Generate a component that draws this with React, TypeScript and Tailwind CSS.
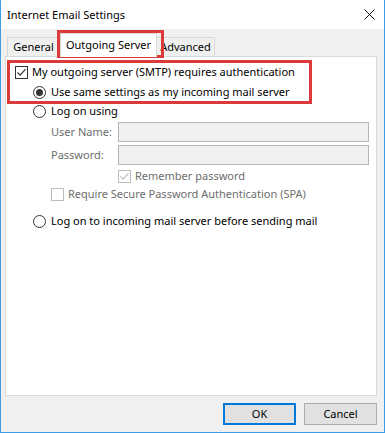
import React from "react";

const font = { fontFamily: '"Noto Sans", "Segoe UI", sans-serif' };

function CheckBox({ checked, disabled }: { checked?: boolean; disabled?: boolean }) {
  const color = disabled ? "#bcbcbc" : "#333333";
  return (
    <span
      className={`flex h-[13px] w-[13px] shrink-0 items-center justify-center border bg-white ${
        disabled ? "border-[#bcbcbc]" : "border-[#333333]"
      }`}
    >
      {checked ? (
        <svg width="11" height="11" viewBox="0 0 11 11">
          <path d="M1.5 5.5 L4.2 8.2 L9.5 2.2" fill="none" stroke={color} strokeWidth="1.2" />
        </svg>
      ) : null}
    </span>
  );
}

function Radio({ checked }: { checked?: boolean }) {
  return (
    <span className="flex h-[13px] w-[13px] shrink-0 items-center justify-center rounded-full border border-[#333333] bg-white">
      {checked ? <span className="h-[7px] w-[7px] rounded-full bg-[#333333]" /> : null}
    </span>
  );
}

export default function App() {
  return (
    <div
      className="relative flex h-[433px] w-[385px] flex-col border-x border-b border-[#3c9de6] bg-[#f0f0f0] text-[11px] text-black"
      style={font}
    >
      {/* title bar */}
      <div className="flex h-[29px] shrink-0 items-center justify-between bg-white pl-[6px] pr-[8px]">
        <span className="text-[11px] leading-none">Internet Email Settings</span>
        <svg width="11" height="11" viewBox="0 0 11 11" className="mr-[1px]">
          <path d="M0.5 0.5 L10.5 10.5 M10.5 0.5 L0.5 10.5" stroke="#111" strokeWidth="1" />
        </svg>
      </div>

      <div className="flex flex-1 flex-col pl-[4px] pr-[7px]">
        {/* tabs */}
        <div className="flex h-[27px] items-end pl-[2px]">
          <div className="flex h-[19px] w-[53px] items-center justify-center border-x border-t border-[#d9d9d9] bg-[#f0f0f0]">
            General
          </div>
          <div className="relative z-10 -mb-px flex h-[24px] w-[97px] items-start justify-center border-x border-t border-[#d9d9d9] bg-white pt-[3px]">
            Outgoing Server
          </div>
          <div className="flex h-[19px] w-[58px] items-center justify-center border-r border-t border-[#d9d9d9] bg-[#f0f0f0]">
            Advanced
          </div>
        </div>

        {/* panel */}
        <div className="flex h-[340px] flex-col border border-[#d9d9d9] bg-white pl-[9px] pt-[7px]">
          <div className="flex h-4 items-center gap-[4px]">
            <CheckBox checked />
            <span>My outgoing server (SMTP) requires authentication</span>
          </div>
          <div className="ml-[18px] mt-[4px] flex h-4 items-center gap-[5px]">
            <Radio checked />
            <span>Use same settings as my incoming mail server</span>
          </div>
          <div className="ml-[18px] mt-[3px] flex h-4 items-center gap-[5px]">
            <Radio />
            <span>Log on using</span>
          </div>
          <div className="ml-[36px] mt-[3px] flex h-[20px] items-center text-[#6d6d6d]">
            <span className="w-[67px]">User Name:</span>
            <div className="h-[20px] w-[251px] border border-[#b0b6bd] bg-[#f0f0f0]" />
          </div>
          <div className="ml-[36px] mt-[3px] flex h-[20px] items-center text-[#6d6d6d]">
            <span className="w-[67px]">Password:</span>
            <div className="h-[20px] w-[251px] border border-[#b0b6bd] bg-[#f0f0f0]" />
          </div>
          <div className="ml-[103px] mt-[3px] flex h-4 items-center gap-[4px] text-[#6d6d6d]">
            <CheckBox checked disabled />
            <span>Remember password</span>
          </div>
          <div className="ml-[36px] mt-[2px] flex h-4 items-center gap-[4px] text-[#6d6d6d]">
            <CheckBox disabled />
            <span>Require Secure Password Authentication (SPA)</span>
          </div>
          <div className="ml-[18px] mt-[11px] flex h-4 items-center gap-[5px]">
            <Radio />
            <span>Log on to incoming mail server before sending mail</span>
          </div>
        </div>

        {/* buttons */}
        <div className="mt-[7px] flex justify-end gap-[8px]">
          <button className="h-[22px] w-[73px] border-2 border-[#0078d7] bg-[#e1e1e1]">OK</button>
          <button className="h-[22px] w-[73px] border border-[#adadad] bg-[#e1e1e1]">Cancel</button>
        </div>
      </div>

      {/* annotation boxes */}
      <div className="pointer-events-none absolute left-[56px] top-[30px] h-[28px] w-[107px] border-[3px] border-[#db3a3a]" />
      <div className="pointer-events-none absolute left-[6px] top-[60px] h-[44px] w-[305px] border-[3px] border-[#db3a3a]" />
    </div>
  );
}
